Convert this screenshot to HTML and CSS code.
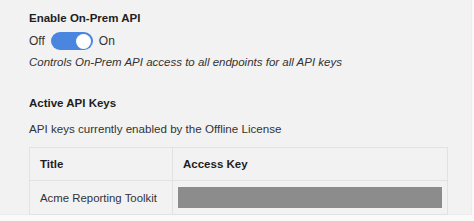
FILE: index.html
```html
<!DOCTYPE html>
<html lang="en">
<head>
  <meta charset="UTF-8">
  <title>On-Prem API</title>
  <link rel="stylesheet" href="styles.css">
</head>
<body>
  <div class="panel">
    <h3 class="section-title">Enable On-Prem API</h3>
    <div class="toggle-row">
      <span>Off</span>
      <span class="toggle"><span class="knob"></span></span>
      <span>On</span>
    </div>
    <p class="hint">Controls On-Prem API access to all endpoints for all API keys</p>

    <h3 class="section-title keys-title">Active API Keys</h3>
    <p class="desc">API keys currently enabled by the Offline License</p>

    <table class="keys">
      <thead>
        <tr>
          <th class="col-title">Title</th>
          <th>Access Key</th>
        </tr>
      </thead>
      <tbody>
        <tr>
          <td>Acme Reporting Toolkit</td>
          <td><div class="masked"></div></td>
        </tr>
      </tbody>
    </table>
  </div>
</body>
</html>
```

FILE: styles.css
```css
body {
  margin: 0;
  background: #fafafa;
  font-family: "Liberation Sans", Arial, sans-serif;
  color: #333;
}

.panel {
  width: 442px;
  height: 203px;
  padding: 11px 0 0 29px;
  background: #f2f2f2;
  border-right: 1px solid #ececec;
  border-bottom: 1px solid #ececec;
}

.section-title {
  margin: 0;
  font-size: 11.5px;
  font-weight: bold;
  line-height: 15px;
  color: #1e1e1e;
}

.toggle-row {
  display: flex;
  align-items: center;
  gap: 6px;
  margin-top: 5px;
  font-size: 12px;
  height: 20px;
}

.toggle {
  width: 42px;
  height: 18px;
  border-radius: 9px;
  background: #4a86df;
  display: flex;
  align-items: center;
  justify-content: flex-end;
  padding-right: 2px;
  box-sizing: border-box;
}

.knob {
  width: 15px;
  height: 15px;
  border-radius: 50%;
  background: #fff;
}

.hint {
  margin: 4px 0 0;
  font-size: 11.5px;
  font-style: italic;
  line-height: 15px;
}

.keys-title {
  margin-top: 26px;
}

.desc {
  margin: 10px 0 0;
  font-size: 11.6px;
  line-height: 15px;
}

.keys {
  margin-top: 11px;
  width: 419px;
  border-collapse: collapse;
  font-size: 11.4px;
}

.keys th,
.keys td {
  border: 1px solid #e2e2e2;
  text-align: left;
  padding: 0 9px 0 10px;
  white-space: nowrap;
}

.keys th {
  height: 32px;
  font-weight: bold;
  font-size: 11.5px;
  color: #1e1e1e;
}

.keys td {
  height: 33px;
}

.col-title {
  width: 123px;
}

.masked {
  height: 21px;
  background: #8c8c8c;
  margin: 0 -4px 0 -5px;
}
```
